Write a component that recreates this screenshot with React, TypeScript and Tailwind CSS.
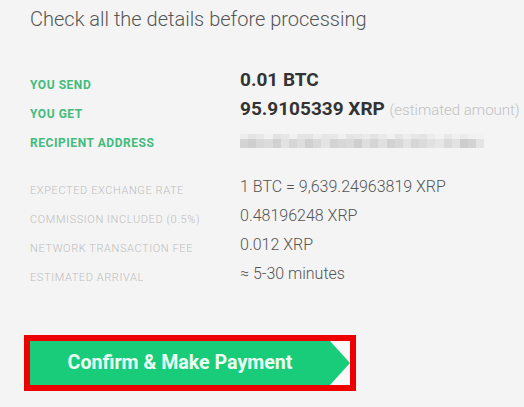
const font = { fontFamily: "Roboto, 'Liberation Sans', sans-serif" };

// pixelated (censored) recipient address
const topCells = ["#ececec", "#e4e4e4", "#e9e9e9", "#f1f1f1", "#e2e2e2", "#e7e7e7", "#f0f0f0", "#e5e5e5", "#e3e3e3", "#ededed", "#e6e6e6", "#e8e8e8", "#f0f0f0", "#e4e4e4", "#e6e6e6", "#ebebeb", "#e3e3e3", "#e9e9e9", "#f1f1f1", "#e5e5e5", "#eeeeee", "#e7e7e7", "#e4e4e4", "#ececec", "#f2f2f2", "#e8e8e8", "#f0f0f0", "#ebebeb", "#f1f1f1", "#f2f2f2"];
const bottomCells = ["#d4d4d4", "#cfcfcf", "#d8d8d8", "#dcdcdc", "#d1d1d1", "#e2e2e2", "#d6d6d6", "#dedede", "#d0d0d0", "#d9d9d9", "#e4e4e4", "#d3d3d3", "#d7d7d7", "#dadada", "#cfcfcf", "#dedede", "#d5d5d5", "#e0e0e0", "#d2d2d2", "#d8d8d8", "#e3e3e3", "#d6d6d6", "#dbdbdb", "#e1e1e1", "#e6e6e6", "#d9d9d9", "#e2e2e2", "#cdcdcd", "#d3d3d3", "#e4e4e4"];

const Address = () => (
  <div className="mt-[7px] flex w-[244px] flex-col">
    <div className="flex h-[5px]">
      {topCells.map((c, i) => (
        <span key={i} className="h-full flex-1" style={{ background: c }} />
      ))}
    </div>
    <div className="flex h-[9px]">
      {bottomCells.map((c, i) => (
        <span key={i} className="h-full flex-1" style={{ background: c }} />
      ))}
    </div>
  </div>
);

const MainRow = ({ label, children }: { label: string; children: React.ReactNode }) => (
  <div className="flex h-[29px] items-start">
    <div className="w-[210px] pt-[8px] text-[12px] leading-[16px] font-bold tracking-[0.55px] text-[#42bc7c]">{label}</div>
    {children}
  </div>
);

const InfoRow = ({ label, value }: { label: string; value: string }) => (
  <div className="flex h-[29px] items-start">
    <div className="w-[210px] pt-[7px] text-[11px] leading-[14px] font-light tracking-[0.6px] text-[#bdbdbd]">{label}</div>
    <div className="text-[16px] leading-[20px] font-light text-[#555]">{value}</div>
  </div>
);

const App = () => {
  return (
    <div className="min-h-[407px] w-[524px] bg-[#f4f4f4] pl-[30px] pt-[5px]" style={font}>
      <h1 className="text-[20px] leading-[28px] font-light text-[#555]">Check all the details before processing</h1>

      <div className="mt-[36px]">
        <MainRow label="YOU SEND">
          <div className="text-[19px] leading-[22px] font-bold text-[#333]">0.01 BTC</div>
        </MainRow>
        <MainRow label="YOU GET">
          <div className="whitespace-nowrap text-[19px] leading-[22px] font-bold text-[#333]">
            95.9105339 XRP <span className="text-[15px] font-light text-[#c2c2c2]">(estimated amount)</span>
          </div>
        </MainRow>
        <MainRow label="RECIPIENT ADDRESS">
          <Address />
        </MainRow>
      </div>

      <div className="mt-[21px]">
        <InfoRow label="EXPECTED EXCHANGE RATE" value="1 BTC = 9,639.24963819 XRP" />
        <InfoRow label="COMMISSION INCLUDED (0.5%)" value="0.48196248 XRP" />
        <InfoRow label="NETWORK TRANSACTION FEE" value="0.012 XRP" />
        <InfoRow label="ESTIMATED ARRIVAL" value="≈ 5-30 minutes" />
      </div>

      <div className="ml-[-6px] mt-[42px] flex h-[56px] w-[332px] border-[6px] border-[#ee0000] bg-[#f9f9f9]">
        <button className="flex h-full w-[300px] items-center justify-center bg-[#19cc7a] text-[19.6px] font-bold text-[#ecfff4]">
          Confirm &amp; Make Payment
        </button>
        <svg width="20" height="44" viewBox="0 0 20 44" className="block">
          <polygon points="0,0 20,22 0,44" fill="#19cc7a" />
        </svg>
      </div>
    </div>
  );
};

export default App;
